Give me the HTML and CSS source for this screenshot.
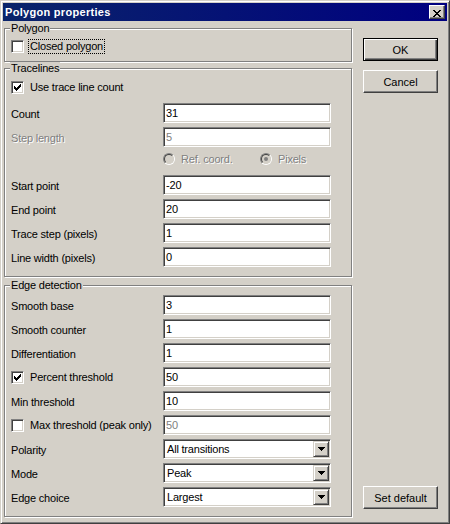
FILE: index.html
```html
<!DOCTYPE html>
<html>
<head>
<meta charset="utf-8">
<title>Polygon properties</title>
<link rel="stylesheet" href="styles.css">
</head>
<body>
<div class="window">
  <div class="titlebar">
    <span class="title">Polygon properties</span>
    <button class="close" type="button"><svg width="8" height="7" viewBox="0 0 8 7" shape-rendering="crispEdges"><path d="M0 0h2v1h-2z M6 0h2v1h-2z M1 1h2v1h-2z M5 1h2v1h-2z M2 2h4v1h-4z M3 3h2v1h-2z M2 4h4v1h-4z M1 5h2v1h-2z M5 5h2v1h-2z M0 6h2v1h-2z M6 6h2v1h-2z" fill="#000"/></svg></button>
  </div>
  <div class="client">
    <div class="left">
      <div class="group g-polygon">
        <div class="legend">Polygon</div>
        <div class="check first">
          <span class="cb"></span>
          <span class="clabel focus">Closed polygon</span>
        </div>
      </div>

      <div class="group g-trace">
        <div class="legend">Tracelines</div>
        <div class="check first">
          <span class="cb"><svg class="tick" width="7" height="7" viewBox="0 0 7 7" shape-rendering="crispEdges"><path d="M6 0h1v1h-1z M5 1h2v1h-2z M0 2h1v1h-1z M4 2h3v1h-3z M0 3h2v1h-2z M3 3h3v1h-3z M0 4h5v1h-5z M1 5h3v1h-3z M2 6h1v1h-1z" fill="#000"/></svg></span>
          <span class="clabel">Use trace line count</span>
        </div>
        <div class="row count-row">
          <span class="lbl">Count</span>
          <span class="edit">31</span>
        </div>
        <div class="row">
          <span class="lbl disabled">Step length</span>
          <span class="edit dis">5</span>
        </div>
        <div class="radios">
          <span class="radio-item ref">
            <span class="radio"><span class="radio-in"></span></span>
            <span class="rlabel disabled">Ref. coord.</span>
          </span>
          <span class="radio-item">
            <span class="radio"><span class="radio-in"><span class="dot"></span></span></span>
            <span class="rlabel disabled">Pixels</span>
          </span>
        </div>
        <div class="row start-row">
          <span class="lbl">Start point</span>
          <span class="edit">-20</span>
        </div>
        <div class="row">
          <span class="lbl">End point</span>
          <span class="edit">20</span>
        </div>
        <div class="row">
          <span class="lbl">Trace step (pixels)</span>
          <span class="edit">1</span>
        </div>
        <div class="row">
          <span class="lbl">Line width (pixels)</span>
          <span class="edit">0</span>
        </div>
      </div>

      <div class="group g-edge">
        <div class="legend">Edge detection</div>
        <div class="row smooth-row">
          <span class="lbl">Smooth base</span>
          <span class="edit">3</span>
        </div>
        <div class="row">
          <span class="lbl">Smooth counter</span>
          <span class="edit">1</span>
        </div>
        <div class="row">
          <span class="lbl">Differentiation</span>
          <span class="edit">1</span>
        </div>
        <div class="row">
          <span class="lbl lbl-check">
            <span class="cb"><svg class="tick" width="7" height="7" viewBox="0 0 7 7" shape-rendering="crispEdges"><path d="M6 0h1v1h-1z M5 1h2v1h-2z M0 2h1v1h-1z M4 2h3v1h-3z M0 3h2v1h-2z M3 3h3v1h-3z M0 4h5v1h-5z M1 5h3v1h-3z M2 6h1v1h-1z" fill="#000"/></svg></span>
            <span class="clabel">Percent threshold</span>
          </span>
          <span class="edit">50</span>
        </div>
        <div class="row">
          <span class="lbl">Min threshold</span>
          <span class="edit">10</span>
        </div>
        <div class="row">
          <span class="lbl lbl-check">
            <span class="cb"></span>
            <span class="clabel">Max threshold (peak only)</span>
          </span>
          <span class="edit dis">50</span>
        </div>
        <div class="row">
          <span class="lbl">Polarity</span>
          <span class="combo"><span class="ctext">All transitions</span><span class="drop"><svg width="7" height="4" viewBox="0 0 7 4" shape-rendering="crispEdges"><path d="M0 0h7v1h-7z M1 1h5v1h-5z M2 2h3v1h-3z M3 3h1v1h-1z" fill="#000"/></svg></span></span>
        </div>
        <div class="row">
          <span class="lbl">Mode</span>
          <span class="combo"><span class="ctext">Peak</span><span class="drop"><svg width="7" height="4" viewBox="0 0 7 4" shape-rendering="crispEdges"><path d="M0 0h7v1h-7z M1 1h5v1h-5z M2 2h3v1h-3z M3 3h1v1h-1z" fill="#000"/></svg></span></span>
        </div>
        <div class="row">
          <span class="lbl">Edge choice</span>
          <span class="combo"><span class="ctext">Largest</span><span class="drop"><svg width="7" height="4" viewBox="0 0 7 4" shape-rendering="crispEdges"><path d="M0 0h7v1h-7z M1 1h5v1h-5z M2 2h3v1h-3z M3 3h1v1h-1z" fill="#000"/></svg></span></span>
        </div>
      </div>
    </div>

    <div class="right">
      <button class="btn default" type="button">OK</button>
      <button class="btn cancel" type="button">Cancel</button>
      <button class="btn setdef" type="button">Set default</button>
    </div>
  </div>
</div>
</body>
</html>
```
FILE: styles.css
```css
* { box-sizing: border-box; }
html, body { margin: 0; padding: 0; }
body {
  width: 450px;
  height: 524px;
  overflow: hidden;
  background: #d4d0c8;
  font-family: "Liberation Sans", Arial, sans-serif;
  font-size: 11px;
  letter-spacing: -0.2px;
  color: #000;
}

.window {
  width: 450px;
  height: 524px;
  background: #d4d0c8;
  border: 1px solid;
  border-color: #d4d0c8 #404040 #404040 #d4d0c8;
  box-shadow: inset 1px 1px #fff, inset -1px -1px #808080;
  padding: 2px;
  display: flex;
  flex-direction: column;
}

.titlebar {
  height: 18px;
  flex: none;
  background: linear-gradient(to right, #0a246a, #000080);
  display: flex;
  align-items: center;
  padding: 0 2px 0 2px;
}
.title {
  flex: 1;
  color: #fff;
  font-weight: bold;
  font-size: 11px;
  letter-spacing: 0.3px;
  line-height: 18px;
}
.close {
  width: 16px;
  height: 14px;
  padding: 0;
  margin: 0;
  background: #d4d0c8;
  border: 1px solid;
  border-color: #fff #404040 #404040 #fff;
  box-shadow: inset -1px -1px #808080;
  display: block;
}
.close svg { display: block; margin: 2px 0 0 3px; }

.client {
  flex: 1;
  display: flex;
  padding-left: 1px;
}
.left {
  width: 348px;
  padding-top: 7px;
  display: flex;
  flex-direction: column;
}
.right {
  width: 75px;
  margin-left: 11px;
  padding-top: 17px;
  padding-bottom: 12px;
  display: flex;
  flex-direction: column;
}

.group {
  border: 1px solid #808080;
  box-shadow: inset 1px 1px #fff, 1px 1px #fff;
  padding: 0 0 0 6px;
}
.g-polygon { padding-bottom: 7px; }
.g-trace { margin-top: 6px; padding-bottom: 9px; }
.g-edge { margin-top: 8px; padding-bottom: 9px; }

.legend {
  width: fit-content;
  margin: -7px 0 0 -1px;
  padding: 0 1px;
  background: #d4d0c8;
  line-height: 13px;
}

.check {
  display: flex;
  align-items: center;
  height: 15px;
}
.g-polygon .check.first { margin-top: 4px; }
.g-trace .check.first { margin-top: 5px; }

.cb {
  width: 13px;
  height: 13px;
  flex: none;
  background: #fff;
  border: 1px solid;
  border-color: #808080 #fff #fff #808080;
  box-shadow: inset 1px 1px #404040, inset -1px -1px #d4d0c8;
  display: block;
}
.cb .tick { display: block; margin: 2px 0 0 2px; }

.clabel {
  margin-left: 4px;
  padding: 0 1px;
  border: 1px solid transparent;
  line-height: 13px;
  white-space: nowrap;
}
.clabel.focus { border: 1px dotted #000; }

.row {
  display: flex;
  align-items: center;
  height: 20px;
  margin-top: 4px;
}
.count-row { margin-top: 8px; }
.start-row { margin-top: 9px; }
.smooth-row { margin-top: 3px; }

.lbl {
  width: 152px;
  flex: none;
  padding-top: 1px;
  white-space: nowrap;
}
.lbl-check {
  display: flex;
  align-items: center;
  padding-top: 0;
}
.disabled { color: #808080; text-shadow: 1px 1px #fff; }

.edit {
  width: 168px;
  height: 20px;
  flex: none;
  background: #fff;
  border: 1px solid;
  border-color: #808080 #fff #fff #808080;
  box-shadow: inset 1px 1px #404040, inset -1px -1px #d4d0c8;
  padding: 0 2px;
  line-height: 18px;
  white-space: nowrap;
}
.edit.dis { color: #808080; }

.radios {
  display: flex;
  align-items: center;
  height: 15px;
  margin-top: 4px;
  padding-left: 152px;
}
.radio-item {
  display: flex;
  align-items: center;
}
.radio-item.ref { width: 97px; }
.radio {
  width: 12px;
  height: 12px;
  flex: none;
  border-radius: 50%;
  border: 1px solid;
  border-color: #808080 #fff #fff #808080;
  display: block;
}
.radio-in {
  width: 10px;
  height: 10px;
  border-radius: 50%;
  border: 1px solid;
  border-color: #404040 #d4d0c8 #d4d0c8 #404040;
  background: #d4d0c8;
  display: flex;
  align-items: center;
  justify-content: center;
}
.dot {
  width: 4px;
  height: 4px;
  border-radius: 50%;
  background: #808080;
  display: block;
}
.rlabel { margin-left: 6px; white-space: nowrap; }

.combo {
  width: 168px;
  height: 20px;
  flex: none;
  background: #fff;
  border: 1px solid;
  border-color: #808080 #fff #fff #808080;
  box-shadow: inset 1px 1px #404040, inset -1px -1px #d4d0c8;
  padding: 1px;
  display: flex;
}
.ctext {
  flex: 1;
  padding-left: 2px;
  line-height: 16px;
  white-space: nowrap;
}
.drop {
  width: 16px;
  height: 16px;
  flex: none;
  background: #d4d0c8;
  border: 1px solid;
  border-color: #d4d0c8 #404040 #404040 #d4d0c8;
  box-shadow: inset 1px 1px #fff, inset -1px -1px #808080;
  display: flex;
  align-items: center;
  justify-content: center;
}
.drop svg { display: block; }

.btn {
  width: 75px;
  height: 23px;
  padding: 0;
  margin: 0;
  font: inherit;
  color: #000;
  background: #d4d0c8;
  border: 1px solid;
  border-color: #fff #404040 #404040 #fff;
  box-shadow: inset -1px -1px #808080;
  text-align: center;
  line-height: 20px;
  display: block;
}
.btn.default {
  border: 1px solid #000;
  box-shadow: inset 1px 1px #fff, inset -1px -1px #404040, inset -2px -2px #808080;
}
.btn.cancel { margin-top: 9px; }
.btn.setdef { margin-top: auto; }
```
